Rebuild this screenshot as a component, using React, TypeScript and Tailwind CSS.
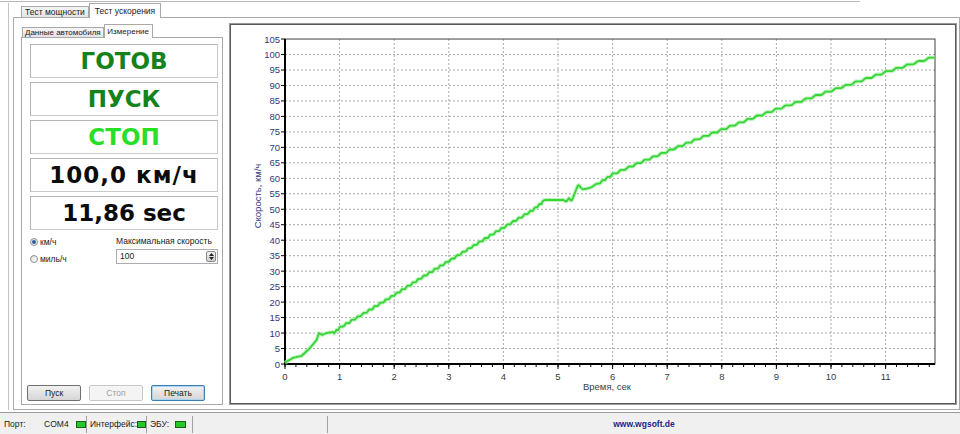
import React from 'react';

const UI = { fontFamily: '"Liberation Sans", Arial, sans-serif' };
const BIG = { fontFamily: '"DejaVu Sans", Verdana, sans-serif' };

// chart geometry (svg coords inside the frame)
const X0 = 54;
const PX_SEC = 54.6;
const Y0 = 339;
const PX_KMH = 3.095;
const PLOT_RIGHT = 704;
const PLOT_TOP = Y0 - 105 * PX_KMH;

const keys: [number, number][] = [
  [0, 0.4], [0.05, 1], [0.15, 2], [0.3, 2.6], [0.45, 5], [0.58, 7.8], [0.62, 10], [0.68, 9.4],
  [0.76, 10], [0.9, 10.4], [1, 12], [1.5, 17.2], [2, 22.6], [2.5, 28.2], [3, 33.6], [3.5, 39],
  [4, 44.4], [4.5, 49.6], [4.75, 53], [5.1, 53], [5.15, 52.4], [5.2, 53.6], [5.25, 52.6],
  [5.37, 58], [5.45, 56.4], [5.6, 57], [6, 61.6], [6.5, 65.4], [7, 69], [7.5, 72.6], [8, 76],
  [8.5, 79.4], [9, 82.6], [9.5, 85.6], [10, 88.6], [10.5, 91.6], [11, 94.6], [11.5, 97.4],
  [11.9, 99.6],
];

function interp(t: number) {
  for (let i = 1; i < keys.length; i++) {
    const [ta, va] = keys[i - 1];
    const [tb, vb] = keys[i];
    if (t <= tb) return va + ((vb - va) * (t - ta)) / (tb - ta);
  }
  return keys[keys.length - 1][1];
}

function curvePath() {
  const pts: string[] = [];
  const step = 1.1;
  for (let t = 0; t <= 11.9; t += 0.02) {
    let v = interp(t);
    if (t > 5.7 || (t > 0.9 && t < 4.7)) {
      const n = v / step;
      const f = n - Math.floor(n);
      const r = Math.min(1, Math.max(0, (f - 0.6) / 0.4));
      v = (Math.floor(n) + r) * step;
    }
    pts.push(`${(X0 + t * PX_SEC).toFixed(1)},${(Y0 - v * PX_KMH).toFixed(1)}`);
  }
  return 'M' + pts.join(' L');
}

function Chart() {
  const yTicks = Array.from({ length: 22 }, (_, i) => i * 5);
  const xTicks = Array.from({ length: 12 }, (_, i) => i);
  const minor = Array.from({ length: 60 }, (_, i) => i * 0.2).filter((t) => t <= 11.9);
  const d = curvePath();
  return (
    <svg width="724" height="379" viewBox="0 0 724 379" style={UI}>
      {yTicks.slice(1, 21).map((v) => (
        <line key={'gy' + v} x1={X0} x2={PLOT_RIGHT} y1={Y0 - v * PX_KMH} y2={Y0 - v * PX_KMH} stroke="#a8a8a8" strokeWidth="1" strokeDasharray="2 2" />
      ))}
      {xTicks.slice(1).map((t) => (
        <line key={'gx' + t} x1={X0 + t * PX_SEC} x2={X0 + t * PX_SEC} y1={PLOT_TOP} y2={Y0} stroke="#a8a8a8" strokeWidth="1" strokeDasharray="2 2" />
      ))}
      <rect x={X0} y={PLOT_TOP} width={PLOT_RIGHT - X0} height={Y0 - PLOT_TOP} fill="none" stroke="#404040" strokeWidth="1" />
      <line x1={X0} x2={X0} y1={PLOT_TOP} y2={Y0 + 1} stroke="#000" strokeWidth="2" />
      <line x1={X0 - 1} x2={PLOT_RIGHT} y1={Y0} y2={Y0} stroke="#000" strokeWidth="2" />
      {yTicks.map((v) => (
        <g key={'ly' + v}>
          <line x1={X0 - 4} x2={X0} y1={Y0 - v * PX_KMH} y2={Y0 - v * PX_KMH} stroke="#000" strokeWidth="1" />
          <text x={X0 - 5} y={Y0 - v * PX_KMH + 3.5} fontSize="9.5" fill="#35357e" textAnchor="end">{v}</text>
        </g>
      ))}
      {minor.map((t) => (
        <line key={'mx' + t} x1={X0 + t * PX_SEC} x2={X0 + t * PX_SEC} y1={Y0} y2={Y0 + 3} stroke="#000" strokeWidth="1" />
      ))}
      {xTicks.map((t) => (
        <g key={'lx' + t}>
          <line x1={X0 + t * PX_SEC} x2={X0 + t * PX_SEC} y1={Y0} y2={Y0 + 5} stroke="#000" strokeWidth="1" />
          <text x={X0 + t * PX_SEC} y={Y0 + 16} fontSize="9.5" fill="#3c3c3c" textAnchor="middle">{t}</text>
        </g>
      ))}
      <text x="376" y={Y0 + 26} fontSize="9.5" fill="#3c3c3c" textAnchor="middle">Время, сек</text>
      <text x="0" y="0" fontSize="9.5" fill="#35357e" textAnchor="middle" transform="translate(30 171) rotate(-90)">Скорость, км/ч</text>
      <path d={d} fill="none" stroke="#a6eea6" strokeWidth="4" strokeLinejoin="round" opacity="0.7" />
      <path d={d} fill="none" stroke="#35d535" strokeWidth="1.8" strokeLinejoin="round" />
    </svg>
  );
}

function BigBox({ text, color, spaced }: { text: string; color: string; spaced?: boolean }) {
  return (
    <div className="h-[34px] flex items-center justify-center border border-[#c9c9c9] border-t-[#b4b4b4] border-l-[#b4b4b4] bg-white">
      <span className={`text-[23px] font-bold leading-none ${spaced ? 'tracking-[1px]' : ''}`} style={{ ...BIG, color }}>{text}</span>
    </div>
  );
}

function Radio({ checked, label }: { checked?: boolean; label: string }) {
  return (
    <div className="flex items-center gap-[2px] h-[10px]">
      <div className="w-[8px] h-[8px] rounded-full border border-[#8e8f8f] bg-gradient-to-br from-[#e0e0e0] to-white flex items-center justify-center">
        {checked && <div className="w-[4px] h-[4px] rounded-full bg-[#2f5f9a]" />}
      </div>
      <span>{label}</span>
    </div>
  );
}

function Btn({ label, disabled, focused }: { label: string; disabled?: boolean; focused?: boolean }) {
  return (
    <div
      className={`w-[54px] h-[16px] flex items-center justify-center rounded-[2px] border ${
        disabled
          ? 'border-[#c8c8c8] bg-[#f4f4f4] text-[#a0a0a0]'
          : focused
          ? 'border-[#3c7fb1] bg-gradient-to-b from-[#f2f2f2] to-[#d5d5d5] text-[#1a1a1a] shadow-[inset_0_0_0_1px_#a8d6f0]'
          : 'border-[#707070] bg-gradient-to-b from-[#f2f2f2] to-[#d5d5d5] text-[#1a1a1a]'
      }`}
    >
      {label}
    </div>
  );
}

function Led() {
  return <div className="w-[11px] h-[7px] bg-[#25c925] border border-[#1d5e1d]" />;
}

export default function App() {
  return (
    <div className="w-[960px] h-[434px] bg-white flex flex-col text-[8.5px] text-[#1a1a1a] overflow-hidden" style={UI}>
      {/* top window edge */}
      <div className="h-[3px]">
        <div className="w-[860px] h-[2px] border-b border-[#b8b8b8]" />
      </div>

      <div className="flex-1 flex pl-[8px]">
        <div className="flex-1 flex flex-col border-l border-[#c4c4c4] pl-[4px]">
          {/* outer tabs */}
          <div className="h-[14px] flex items-end pl-[8px]">
            <div className="h-[11px] px-[3px] border border-b-0 border-[#a9a9a9] bg-gradient-to-b from-[#f6f6f6] to-[#e4e4e4] flex items-center leading-none whitespace-nowrap">Тест мощности</div>
            <div className="h-[15px] px-[5px] border border-b-0 border-[#a9a9a9] bg-white flex items-center leading-none relative top-[1px] z-10 whitespace-nowrap">Тест ускорения</div>
          </div>

          {/* outer panel */}
          <div className="h-[393px] border border-[#a9a9a9] bg-white flex pl-[7px] pr-[2px] pt-[5px] pb-[4px] gap-[6px]">
            {/* inner tab control */}
            <div className="w-[202px] flex flex-col">
              <div className="h-[14px] flex items-end pl-[1px]">
                <div className="h-[10px] px-[2px] border border-b-0 border-[#a9a9a9] bg-gradient-to-b from-[#f6f6f6] to-[#e4e4e4] flex items-center justify-center leading-none whitespace-nowrap text-[8px]">Данные автомобиля</div>
                <div className="h-[14px] w-[49px] border border-b-0 border-[#a9a9a9] bg-white flex items-center justify-center leading-none relative top-[1px] z-10 whitespace-nowrap text-[8px]">Измерение</div>
              </div>
              <div className="flex-1 border border-[#a9a9a9] bg-white flex flex-col pl-[8px] pr-[4px] pt-[6px] pb-[3px]">
                <div className="flex flex-col gap-[4px]">
                  <BigBox text="ГОТОВ" color="#15821a" />
                  <BigBox text="ПУСК" color="#15821a" />
                  <BigBox text="СТОП" color="#27df27" />
                  <BigBox text="100,0 км/ч" color="#0c0c0c" spaced />
                  <BigBox text="11,86 sec" color="#0c0c0c" />
                </div>

                <div className="flex mt-[6px]">
                  <div className="w-[86px] flex flex-col gap-[7px] pt-[1px]">
                    <Radio checked label="км/ч" />
                    <Radio label="миль/ч" />
                  </div>
                  <div className="flex-1 flex flex-col">
                    <div className="h-[11px] leading-none flex items-center">Максимальная скорость</div>
                    <div className="mt-[2px] h-[15px] border border-[#abadb3] flex items-center pl-[3px] pr-[1px]">
                      <span className="flex-1">100</span>
                      <div className="w-[10px] h-[11px] border border-[#8a8a8a] rounded-[2px] bg-gradient-to-b from-[#f0f0f0] to-[#cfcfcf] flex flex-col items-center justify-center gap-[1px]">
                        <svg width="5" height="3" viewBox="0 0 5 3"><path d="M0 3 L2.5 0 L5 3 Z" fill="#222" /></svg>
                        <svg width="5" height="3" viewBox="0 0 5 3"><path d="M0 0 L2.5 3 L5 0 Z" fill="#222" /></svg>
                      </div>
                    </div>
                  </div>
                </div>

                <div className="mt-auto flex -ml-[3px] gap-[8px]">
                  <Btn label="Пуск" />
                  <Btn label="Стоп" disabled />
                  <Btn label="Печать" focused />
                </div>
              </div>
            </div>

            {/* chart frame */}
            <div className="flex-1 border border-[#9a9a9a]">
              <div className="w-full h-full border border-[#5a5a5a] bg-white">
                <Chart />
              </div>
            </div>
          </div>
        </div>
      </div>

      {/* status bar */}
      <div className="h-[22px] mt-[2px] border-t border-[#9a9a9a] bg-[#f0f0f0] flex items-end pb-[1px]">
        <div className="h-[17px] w-[87px] flex items-center pl-[4px] border-r border-[#a0a0a0]">
          <span className="w-[43px]">Порт:</span>
          <span className="mr-[7px]">COM4</span>
          <Led />
        </div>
        <div className="h-[17px] w-[60px] flex items-center pl-[3px] border-r border-[#a0a0a0]">
          <span>Интерфейс:</span>
          <Led />
        </div>
        <div className="h-[17px] w-[46px] flex items-center pl-[3px] border-r border-[#a0a0a0]">
          <span className="w-[25px]">ЭБУ:</span>
          <Led />
        </div>
        <div className="h-[17px] w-[135px] border-r border-[#a0a0a0]" />
        <div className="h-[17px] flex-1 flex items-center justify-center">
          <span className="font-bold text-[#1e1e8f] text-[8.5px]">www.wgsoft.de</span>
        </div>
      </div>
    </div>
  );
}
